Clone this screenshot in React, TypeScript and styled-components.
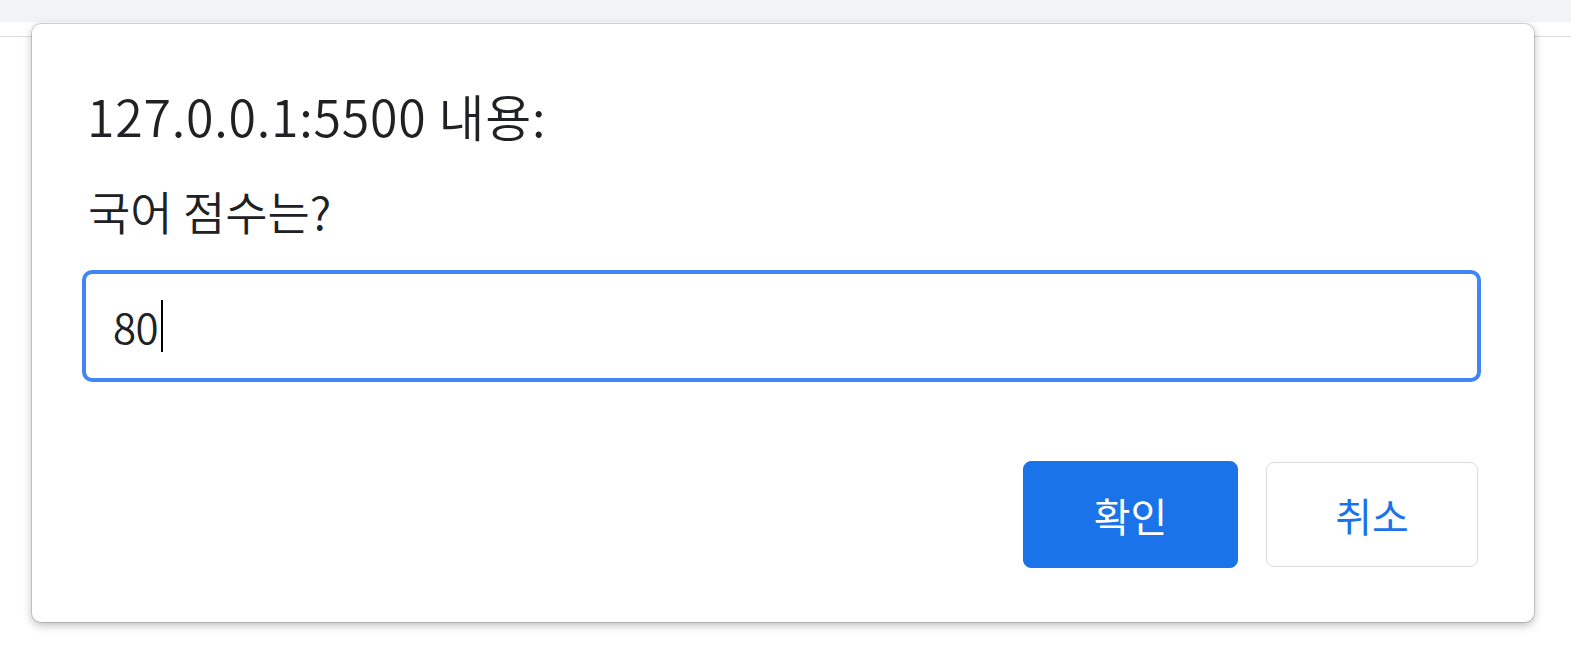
import React from 'react';
import styled, { createGlobalStyle } from 'styled-components';

const GlobalStyle = createGlobalStyle`
  html, body {
    margin: 0;
    padding: 0;
    background: #ffffff;
  }
  body {
    font-family: "Noto Sans CJK KR", "Noto Sans", sans-serif;
    color: #202124;
  }
`;

const App: React.FC = () => {
  return (
    <Page>
      <GlobalStyle />
      <TabStrip />
      <Toolbar />
      <Dialog role='dialog'>
        <Title>127.0.0.1:5500 내용:</Title>
        <Message>국어 점수는?</Message>
        <InputBox>
          <InputText>80</InputText>
          <Caret />
        </InputBox>
        <ButtonRow>
          <Button primary>확인</Button>
          <Button>취소</Button>
        </ButtonRow>
      </Dialog>
    </Page>
  );
};

const Page = styled.div`
  position: relative;
  width: 1571px;
  height: 650px;
  overflow: hidden;
  background: #ffffff;
`;

const TabStrip = styled.div`
  height: 22px;
  background: #f1f3f4;
`;

const Toolbar = styled.div`
  height: 14px;
  background: #ffffff;
  border-bottom: 1px solid #dadce0;
`;

const Dialog = styled.div`
  position: absolute;
  left: 32px;
  top: 24px;
  width: 1502px;
  height: 598px;
  box-sizing: border-box;
  padding: 61px 53px 54px 50px;
  display: flex;
  flex-direction: column;
  background: #ffffff;
  border-radius: 9px;
  box-shadow: 0 0 0 1px rgba(0, 0, 0, 0.14), 0 3px 10px rgba(0, 0, 0, 0.28);
`;

const Title = styled.div`
  margin-left: 5px;
  font-size: 50px;
  font-weight: 350;
  line-height: 60px;
  letter-spacing: 0.8px;
  color: #202124;
`;

const Message = styled.div`
  margin: 39px 0 0 6px;
  font-size: 46px;
  font-weight: 350;
  line-height: 53px;
  color: #202124;
`;

const InputBox = styled.div`
  margin-top: 33px;
  height: 112px;
  box-sizing: border-box;
  border: 4px solid #4285f4;
  border-radius: 10px;
  padding-left: 27px;
  display: flex;
  align-items: center;
`;

const InputText = styled.span`
  font-size: 42px;
  font-weight: 350;
  line-height: 52px;
  letter-spacing: -0.5px;
  color: #202124;
`;

const Caret = styled.span`
  width: 2px;
  height: 52px;
  margin-left: 3px;
  background: #000000;
`;

const ButtonRow = styled.div`
  margin-top: 79px;
  margin-right: 3px;
  display: flex;
  justify-content: flex-end;
  align-items: center;
  gap: 28px;
`;

const Button = styled.button<{ primary?: boolean }>`
  box-sizing: border-box;
  width: ${p => (p.primary ? '215px' : '212px')};
  height: ${p => (p.primary ? '107px' : '105px')};
  border-radius: 8px;
  border: 1px solid ${p => (p.primary ? '#1a73e8' : '#dadce0')};
  background: ${p => (p.primary ? '#1a73e8' : '#ffffff')};
  color: ${p => (p.primary ? '#ffffff' : '#1a73e8')};
  font-family: "Noto Sans CJK KR", "Noto Sans", sans-serif;
  font-size: 40px;
  font-weight: 400;
  padding: 0;
  cursor: pointer;
`;

export default App;
